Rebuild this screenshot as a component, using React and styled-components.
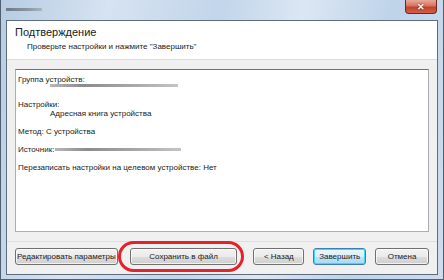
import React from 'react';
import styled, { createGlobalStyle } from 'styled-components';

const GlobalStyle = createGlobalStyle`
  html, body {
    margin: 0;
    padding: 0;
    background: #ffffff;
    overflow: hidden;
  }
  body {
    font-family: "Liberation Sans", Arial, sans-serif;
  }
`;

const Window = styled.div`
  width: 444px;
  height: 280px;
  box-sizing: border-box;
  display: flex;
  flex-direction: column;
  padding: 0 5px 4px 5px;
  background: linear-gradient(100deg, #b7cce3 0%, #d6e3f1 22%, #c2d5ea 45%, #dbe7f3 62%, #bfd3e9 80%, #cddcee 100%);
  border: 1px solid #4f5f70;
  border-top: none;
`;

const TitleBar = styled.div`
  height: 20px;
  display: flex;
  justify-content: space-between;
  align-items: flex-start;
`;

const BlurredTitle = styled.div`
  margin-top: 8px;
  width: 36px;
  height: 3px;
  background: linear-gradient(90deg, #6f7b88, #8a95a2 60%, #a9b5c2);
  filter: blur(0.7px);
`;

const CloseButton = styled.div`
  width: 32px;
  height: 14px;
  margin-right: 1px;
  box-sizing: border-box;
  border: 1px solid #6b2a20;
  border-top: none;
  border-radius: 0 0 4px 4px;
  background: linear-gradient(180deg, #e9a99b 0%, #d9735d 45%, #c4412a 55%, #d2604a 100%);
  display: flex;
  align-items: center;
  justify-content: center;
  color: #ffffff;
  font-size: 9px;
  font-weight: bold;
  text-shadow: 0 0 2px #5a1a10;
`;

const Client = styled.div`
  flex: 1;
  display: flex;
  flex-direction: column;
  background: #f0f0f0;
  border: 1px solid #5d6d7e;
`;

const Header = styled.div`
  height: 39px;
  box-sizing: border-box;
  background: #ffffff;
  border-bottom: 1px solid #dcdcdc;
  padding: 5px 0 0 8px;
`;

const Heading = styled.div`
  font-size: 11px;
  color: #1b1b1b;
  line-height: 13px;
`;

const SubHeading = styled.div`
  font-size: 8px;
  color: #1b1b1b;
  line-height: 10px;
  margin: 3px 0 0 12px;
`;

const Body = styled.div`
  padding: 9px 8px 0 8px;
`;

const SummaryBox = styled.div`
  height: 163px;
  box-sizing: border-box;
  background: #ffffff;
  border: 1px solid #abadb3;
  border-top-color: #707070;
  padding: 5px 2px;
  display: flex;
  flex-direction: column;
`;

const Line = styled.div`
  font-size: 8px;
  line-height: 9px;
  height: 9px;
  color: #222222;
  white-space: nowrap;
  padding-left: ${(p) => (p.$indent ? '32px' : '0')};
  margin-top: ${(p) => (p.$gap ? `${p.$gap}px` : '0')};
  display: flex;
  align-items: center;
`;

const Blurred = styled.div`
  width: ${(p) => p.$width}px;
  height: 3px;
  margin-left: ${(p) => p.$offset || 0}px;
  background: linear-gradient(90deg, #b8b8b8, #8c8c8c 25%, #a4a4a4 60%, #c4c4c4);
  filter: blur(0.7px);
`;

const Footer = styled.div`
  margin-top: 9px;
  border-top: 1px solid #dfdfdf;
  padding: 6px 8px 0 8px;
  display: flex;
  align-items: center;
`;

const Button = styled.div`
  position: relative;
  height: 17px;
  width: ${(p) => p.$width}px;
  margin-left: ${(p) => p.$gap || 0}px;
  box-sizing: border-box;
  border: 1px solid ${(p) => (p.$primary ? '#3c7fb1' : '#707070')};
  border-radius: 3px;
  background: ${(p) =>
    p.$primary
      ? 'linear-gradient(180deg, #eaf6fd 0%, #d9f0fc 50%, #bee6fd 51%, #a7d9f5 100%)'
      : 'linear-gradient(180deg, #f2f2f2 0%, #ebebeb 50%, #dddddd 51%, #cfcfcf 100%)'};
  box-shadow: inset 0 0 0 1px ${(p) => (p.$primary ? '#48d4f8' : 'rgba(255,255,255,0.7)')};
  display: flex;
  align-items: center;
  justify-content: center;
  font-size: 8px;
  color: #1b1b1b;
  white-space: nowrap;
`;

const Highlight = styled.div`
  position: absolute;
  left: -13px;
  top: -8px;
  width: 126px;
  height: 31px;
  box-sizing: border-box;
  border: 3px solid #e3222b;
  border-radius: 16px;
  pointer-events: none;
`;

export default function App() {
  return (
    <>
      <GlobalStyle />
      <Window>
        <TitleBar>
          <BlurredTitle />
          <CloseButton>✕</CloseButton>
        </TitleBar>
        <Client>
          <Header>
            <Heading>Подтверждение</Heading>
            <SubHeading>Проверьте настройки и нажмите "Завершить"</SubHeading>
          </Header>
          <Body>
            <SummaryBox>
              <Line>Группа устройств:</Line>
              <Line $indent $gap={-3}><Blurred $width={128} /></Line>
              <Line $gap={10}>Настройки:</Line>
              <Line $indent>Адресная книга устройства</Line>
              <Line $gap={9}>Метод: С устройства</Line>
              <Line $gap={9}>Источник:<Blurred $width={126} $offset={1} /></Line>
              <Line $gap={9}>Перезаписать настройки на целевом устройстве: Нет</Line>
            </SummaryBox>
          </Body>
          <Footer>
            <Button $width={103}>Редактировать параметры</Button>
            <Button $width={108} $gap={12}>
              Сохранить в файл
              <Highlight />
            </Button>
            <Button $width={51} $gap={16}>&lt; Назад</Button>
            <Button $width={53} $gap={9} $primary>Завершить</Button>
            <Button $width={54} $gap={9}>Отмена</Button>
          </Footer>
        </Client>
      </Window>
    </>
  );
}
